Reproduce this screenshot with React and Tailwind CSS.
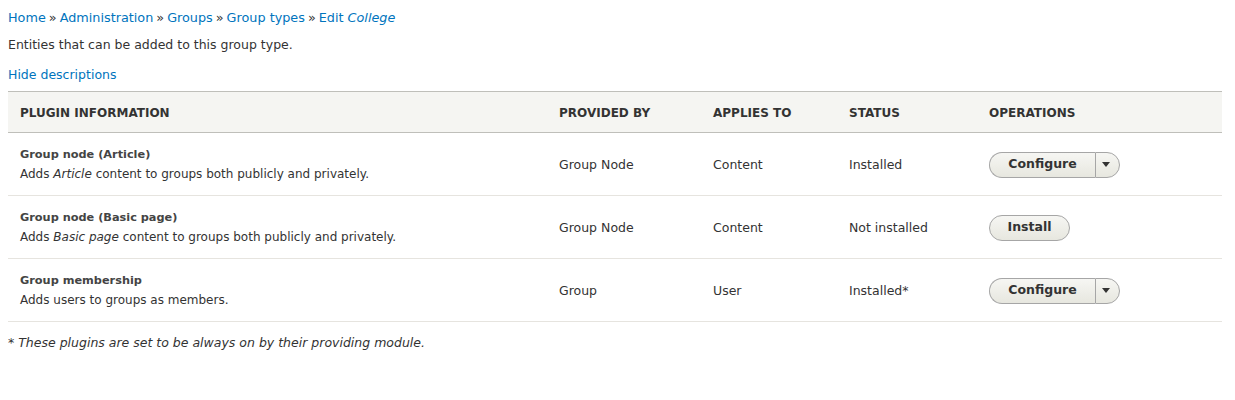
import { useState } from 'react'

const FONT = { fontFamily: '"DejaVu Sans", "Noto Sans", sans-serif' }

const ROWS = [
    {
        id: 'article',
        title: 'Group node (Article)',
        before: 'Adds ',
        em: 'Article',
        after: ' content to groups both publicly and privately.',
        provider: 'Group Node',
        applies: 'Content',
        status: 'Installed',
        op: 'configure',
    },
    {
        id: 'page',
        title: 'Group node (Basic page)',
        before: 'Adds ',
        em: 'Basic page',
        after: ' content to groups both publicly and privately.',
        provider: 'Group Node',
        applies: 'Content',
        status: 'Not installed',
        op: 'install',
    },
    {
        id: 'membership',
        title: 'Group membership',
        before: 'Adds users to groups as members.',
        provider: 'Group',
        applies: 'User',
        status: 'Installed*',
        op: 'configure',
    },
]

function Crumb({ children }) {
    return (
        <a href="#" className="text-[#0074bd] hover:underline">
            {children}
        </a>
    )
}

function Sep() {
    return <span className="px-[3px] text-[#333]">»</span>
}

const btnClass =
    'h-[26px] border border-[#a6a6a6] bg-gradient-to-b from-[#f6f6f3] to-[#e7e7df] text-[12.5px] font-bold text-[#333]'

function Operation({ kind }) {
    if (kind === 'install') {
        return (
            <button className={`${btnClass} w-[81px] rounded-full`}>Install</button>
        )
    }
    return (
        <div className="flex">
            <button className={`${btnClass} w-[106px] rounded-l-full border-r-0`}>
                Configure
            </button>
            <button
                className={`${btnClass} flex w-[25px] items-center justify-center rounded-r-full pr-[3px]`}
            >
                <svg width="8" height="5" viewBox="0 0 8 5">
                    <path d="M0 0h8L4 5z" fill="#333" />
                </svg>
            </button>
        </div>
    )
}

export default function App() {
    const [showDesc, setShowDesc] = useState(true)

    return (
        <div className="min-h-[400px] bg-white text-[12.5px] text-[#333]" style={FONT}>
            <div className="px-2 pt-[8px]">
                <nav className="h-[19px] text-[12.8px] leading-[19px]">
                    <Crumb>Home</Crumb>
                    <Sep />
                    <Crumb>Administration</Crumb>
                    <Sep />
                    <Crumb>Groups</Crumb>
                    <Sep />
                    <Crumb>Group types</Crumb>
                    <Sep />
                    <Crumb>
                        Edit <em>College</em>
                    </Crumb>
                </nav>
                <p className="mt-[8px] h-[19px] leading-[19px]">
                    Entities that can be added to this group type.
                </p>
                <a
                    href="#"
                    onClick={(e) => {
                        e.preventDefault()
                        setShowDesc(!showDesc)
                    }}
                    className="mt-[11px] block h-[19px] leading-[19px] text-[#0074bd]"
                >
                    {showDesc ? 'Hide descriptions' : 'Show descriptions'}
                </a>

                <table className="mt-[7px] w-[1214px] border-collapse text-left">
                    <thead>
                        <tr className="h-[41px] border-y border-[#bfbfba] bg-[#f5f5f2]">
                            <th className="w-[539px] px-3 pt-[1px] text-[12px] font-bold uppercase">
                                Plugin information
                            </th>
                            <th className="w-[154px] px-3 pt-[1px] text-[12px] font-bold uppercase">
                                Provided by
                            </th>
                            <th className="w-[136px] px-3 pt-[1px] text-[12px] font-bold uppercase">
                                Applies to
                            </th>
                            <th className="w-[140px] px-3 pt-[1px] text-[12px] font-bold uppercase">
                                Status
                            </th>
                            <th className="px-3 pt-[1px] text-[12px] font-bold uppercase">
                                Operations
                            </th>
                        </tr>
                    </thead>
                    <tbody>
                        {ROWS.map((r) => (
                            <tr key={r.id} className="h-[63px] border-b border-[#e6e4df]">
                                <td className="px-3 pt-[1px]">
                                    <div className="text-[11.3px] font-bold leading-[19px] text-[#444]">
                                        {r.title}
                                    </div>
                                    {showDesc && (
                                        <div className="text-[12px] leading-[20px]">
                                            {r.before}
                                            {r.em && <em>{r.em}</em>}
                                            {r.after}
                                        </div>
                                    )}
                                </td>
                                <td className="px-3 pt-[2px]">{r.provider}</td>
                                <td className="px-3 pt-[2px]">{r.applies}</td>
                                <td className="px-3 pt-[2px]">{r.status}</td>
                                <td className="px-3 pt-[1px]">
                                    <Operation kind={r.op} />
                                </td>
                            </tr>
                        ))}
                    </tbody>
                </table>

                <p className="mt-[11px] italic leading-[19px]">
                    * These plugins are set to be always on by their providing module.
                </p>
            </div>
        </div>
    )
}
